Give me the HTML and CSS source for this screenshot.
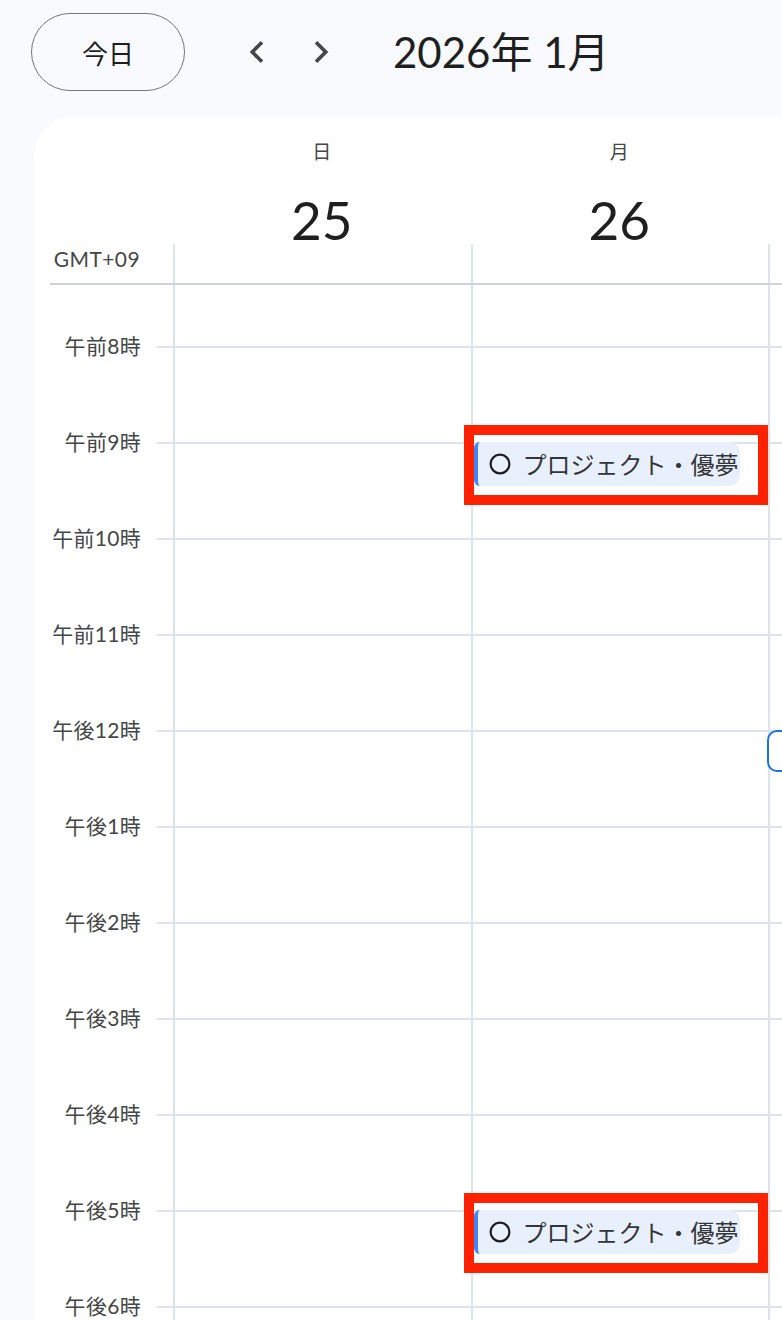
FILE: index.html
```html
<!DOCTYPE html>
<html lang="ja">
<head>
<meta charset="utf-8">
<title>カレンダー</title>
<link rel="stylesheet" href="styles.css">
</head>
<body>
<header class="topbar">
  <button class="today">今日</button>
  <button class="nav prev" aria-label="前の期間"><svg viewBox="0 0 24 24"><path d="M15.41 7.41L14 6l-6 6 6 6 1.41-1.41L10.83 12z"/></svg></button>
  <button class="nav next" aria-label="次の期間"><svg viewBox="0 0 24 24"><path d="M10 6L8.59 7.41 13.17 12l-4.58 4.59L10 18l6-6z"/></svg></button>
  <h1 class="title">2026年 1月</h1>
</header>
<main class="card">
  <div class="head">
    <div class="tzcol"><span class="tz">GMT+09</span></div>
    <div class="dayhead"><div class="dname">日</div><div class="dnum">25</div><div class="dgap"></div></div>
    <div class="dayhead"><div class="dname">月</div><div class="dnum">26</div><div class="dgap"></div></div>
    <div class="dayhead"><div class="dname"></div><div class="dnum"></div><div class="dgap"></div></div>
  </div>
  <div class="grid">
    <div class="times">
      <div class="lead"></div>
      <div class="tlabel">午前8時</div>
      <div class="tlabel">午前9時</div>
      <div class="tlabel">午前10時</div>
      <div class="tlabel">午前11時</div>
      <div class="tlabel">午後12時</div>
      <div class="tlabel">午後1時</div>
      <div class="tlabel">午後2時</div>
      <div class="tlabel">午後3時</div>
      <div class="tlabel">午後4時</div>
      <div class="tlabel">午後5時</div>
      <div class="tlabel">午後6時</div>
    </div>
    <div class="ticks">
      <div class="spacer"></div>
      <div class="hour"></div><div class="hour"></div><div class="hour"></div><div class="hour"></div>
      <div class="hour"></div><div class="hour"></div><div class="hour"></div><div class="hour"></div>
      <div class="hour"></div><div class="hour"></div><div class="hour"></div>
    </div>
    <div class="day">
      <div class="spacer"></div>
      <div class="hour"></div><div class="hour"></div><div class="hour"></div><div class="hour"></div>
      <div class="hour"></div><div class="hour"></div><div class="hour"></div><div class="hour"></div>
      <div class="hour"></div><div class="hour"></div><div class="hour"></div>
    </div>
    <div class="day">
      <div class="spacer"></div>
      <div class="hour"></div>
      <div class="hour">
        <div class="event">
          <svg class="task" viewBox="0 0 22 22"><circle cx="11" cy="11" r="9.4"/></svg>
          <span class="etitle">プロジェクト・優夢</span>
        </div>
        <div class="mark"></div>
      </div>
      <div class="hour"></div><div class="hour"></div>
      <div class="hour"></div><div class="hour"></div><div class="hour"></div><div class="hour"></div>
      <div class="hour"></div>
      <div class="hour">
        <div class="event">
          <svg class="task" viewBox="0 0 22 22"><circle cx="11" cy="11" r="9.4"/></svg>
          <span class="etitle">プロジェクト・優夢</span>
        </div>
        <div class="mark"></div>
      </div>
      <div class="hour"></div>
    </div>
    <div class="day">
      <div class="spacer"></div>
      <div class="hour"></div><div class="hour"></div><div class="hour"></div><div class="hour"></div>
      <div class="hour"><div class="event outline"></div></div>
      <div class="hour"></div><div class="hour"></div><div class="hour"></div>
      <div class="hour"></div><div class="hour"></div><div class="hour"></div>
    </div>
  </div>
</main>
</body>
</html>
```
FILE: styles.css
```css
html, body {
  margin: 0;
  padding: 0;
  overflow: hidden;
  height: 100%;
}
body {
  background: #f8fafd;
  font-family: Lato, "Noto Sans CJK JP", sans-serif;
  color: #1f1f1f;
}
.topbar {
  display: flex;
  align-items: center;
  height: 104px;
  padding-left: 31px;
}
.today {
  width: 154px;
  height: 78px;
  border: 1.5px solid #747775;
  border-radius: 39px;
  background: transparent;
  font-family: "Noto Sans CJK JP", sans-serif;
  font-size: 26px;
  color: #1f1f1f;
  padding: 0;
  margin: 0;
}
.nav {
  width: 44px;
  height: 44px;
  padding: 0;
  border: 0;
  background: transparent;
  display: flex;
}
.nav svg {
  width: 44px;
  height: 44px;
  fill: #444746;
}
.prev { margin-left: 50px; }
.next { margin-left: 20px; }
.title {
  margin: 0 0 0 50px;
  font-size: 42px;
  font-weight: 400;
  line-height: 56px;
  color: #1f1f1f;
}
.card {
  margin: 12px 0 0 34px;
  background: #fff;
  border-top-left-radius: 40px;
  height: 1300px;
  width: 1100px;
}
.head {
  display: grid;
  grid-template-columns: 123px 297.5px 297.5px 297.5px;
  margin-left: 16px;
  border-bottom: 2px solid #cfd2d6;
}
.tzcol {
  display: flex;
  align-items: flex-end;
  justify-content: flex-end;
  padding: 0 33px 12px 0;
}
.tz {
  font-size: 21px;
  line-height: 24px;
  color: #444746;
  letter-spacing: 0.4px;
}
.dayhead {
  display: flex;
  flex-direction: column;
  align-items: stretch;
  padding-top: 23px;
}
.dname {
  height: 24px;
  text-align: center;
  font-family: "Noto Sans CJK JP", sans-serif;
  font-size: 19px;
  line-height: 24px;
  color: #444746;
}
.dnum {
  height: 48px;
  margin-top: 33px;
  text-align: center;
  font-size: 53px;
  line-height: 48px;
  color: #1f1f1f;
}
.dgap {
  height: 39px;
  border-left: 2px solid #dde3ea;
}
.grid {
  display: flex;
}
.times {
  width: 123px;
  flex-shrink: 0;
}
.lead { height: 13px; }
.tlabel {
  height: 96px;
  line-height: 96px;
  text-align: right;
  padding-right: 16px;
  font-size: 21px;
  letter-spacing: 0.3px;
  color: #444746;
  white-space: nowrap;
}
.ticks {
  width: 16px;
  flex-shrink: 0;
}
.day {
  width: 297.5px;
  flex-shrink: 0;
  box-sizing: border-box;
  border-left: 2px solid #dde3ea;
  height: 1100px;
}
.spacer { height: 61px; }
.hour {
  position: relative;
  height: 96px;
  box-sizing: border-box;
  border-top: 2px solid #dde3ea;
}
.event {
  display: flex;
  align-items: center;
  height: 44px;
  margin: -2px 28px 0 1px;
  box-sizing: border-box;
  border-left: 4px solid #4285f4;
  background: #e8effd;
  border-radius: 6px 11px 11px 6px;
  overflow: hidden;
  white-space: nowrap;
}
.task {
  width: 22px;
  height: 22px;
  flex-shrink: 0;
  margin-left: 11px;
  fill: none;
  stroke: #1f1f1f;
  stroke-width: 2.2;
}
.etitle {
  margin-left: 12px;
  font-family: "Noto Sans CJK JP", sans-serif;
  font-size: 24px;
  line-height: 30px;
  color: #333537;
}
.event.outline {
  height: 42px;
  margin: -2px 20px 0 -3px;
  border: 2px solid #1a73e8;
  background: #fff;
  border-radius: 10px;
}
.mark {
  position: absolute;
  left: -9px;
  top: -19px;
  width: 304px;
  height: 80px;
  box-sizing: border-box;
  border: 10px solid #ff2200;
}
```
